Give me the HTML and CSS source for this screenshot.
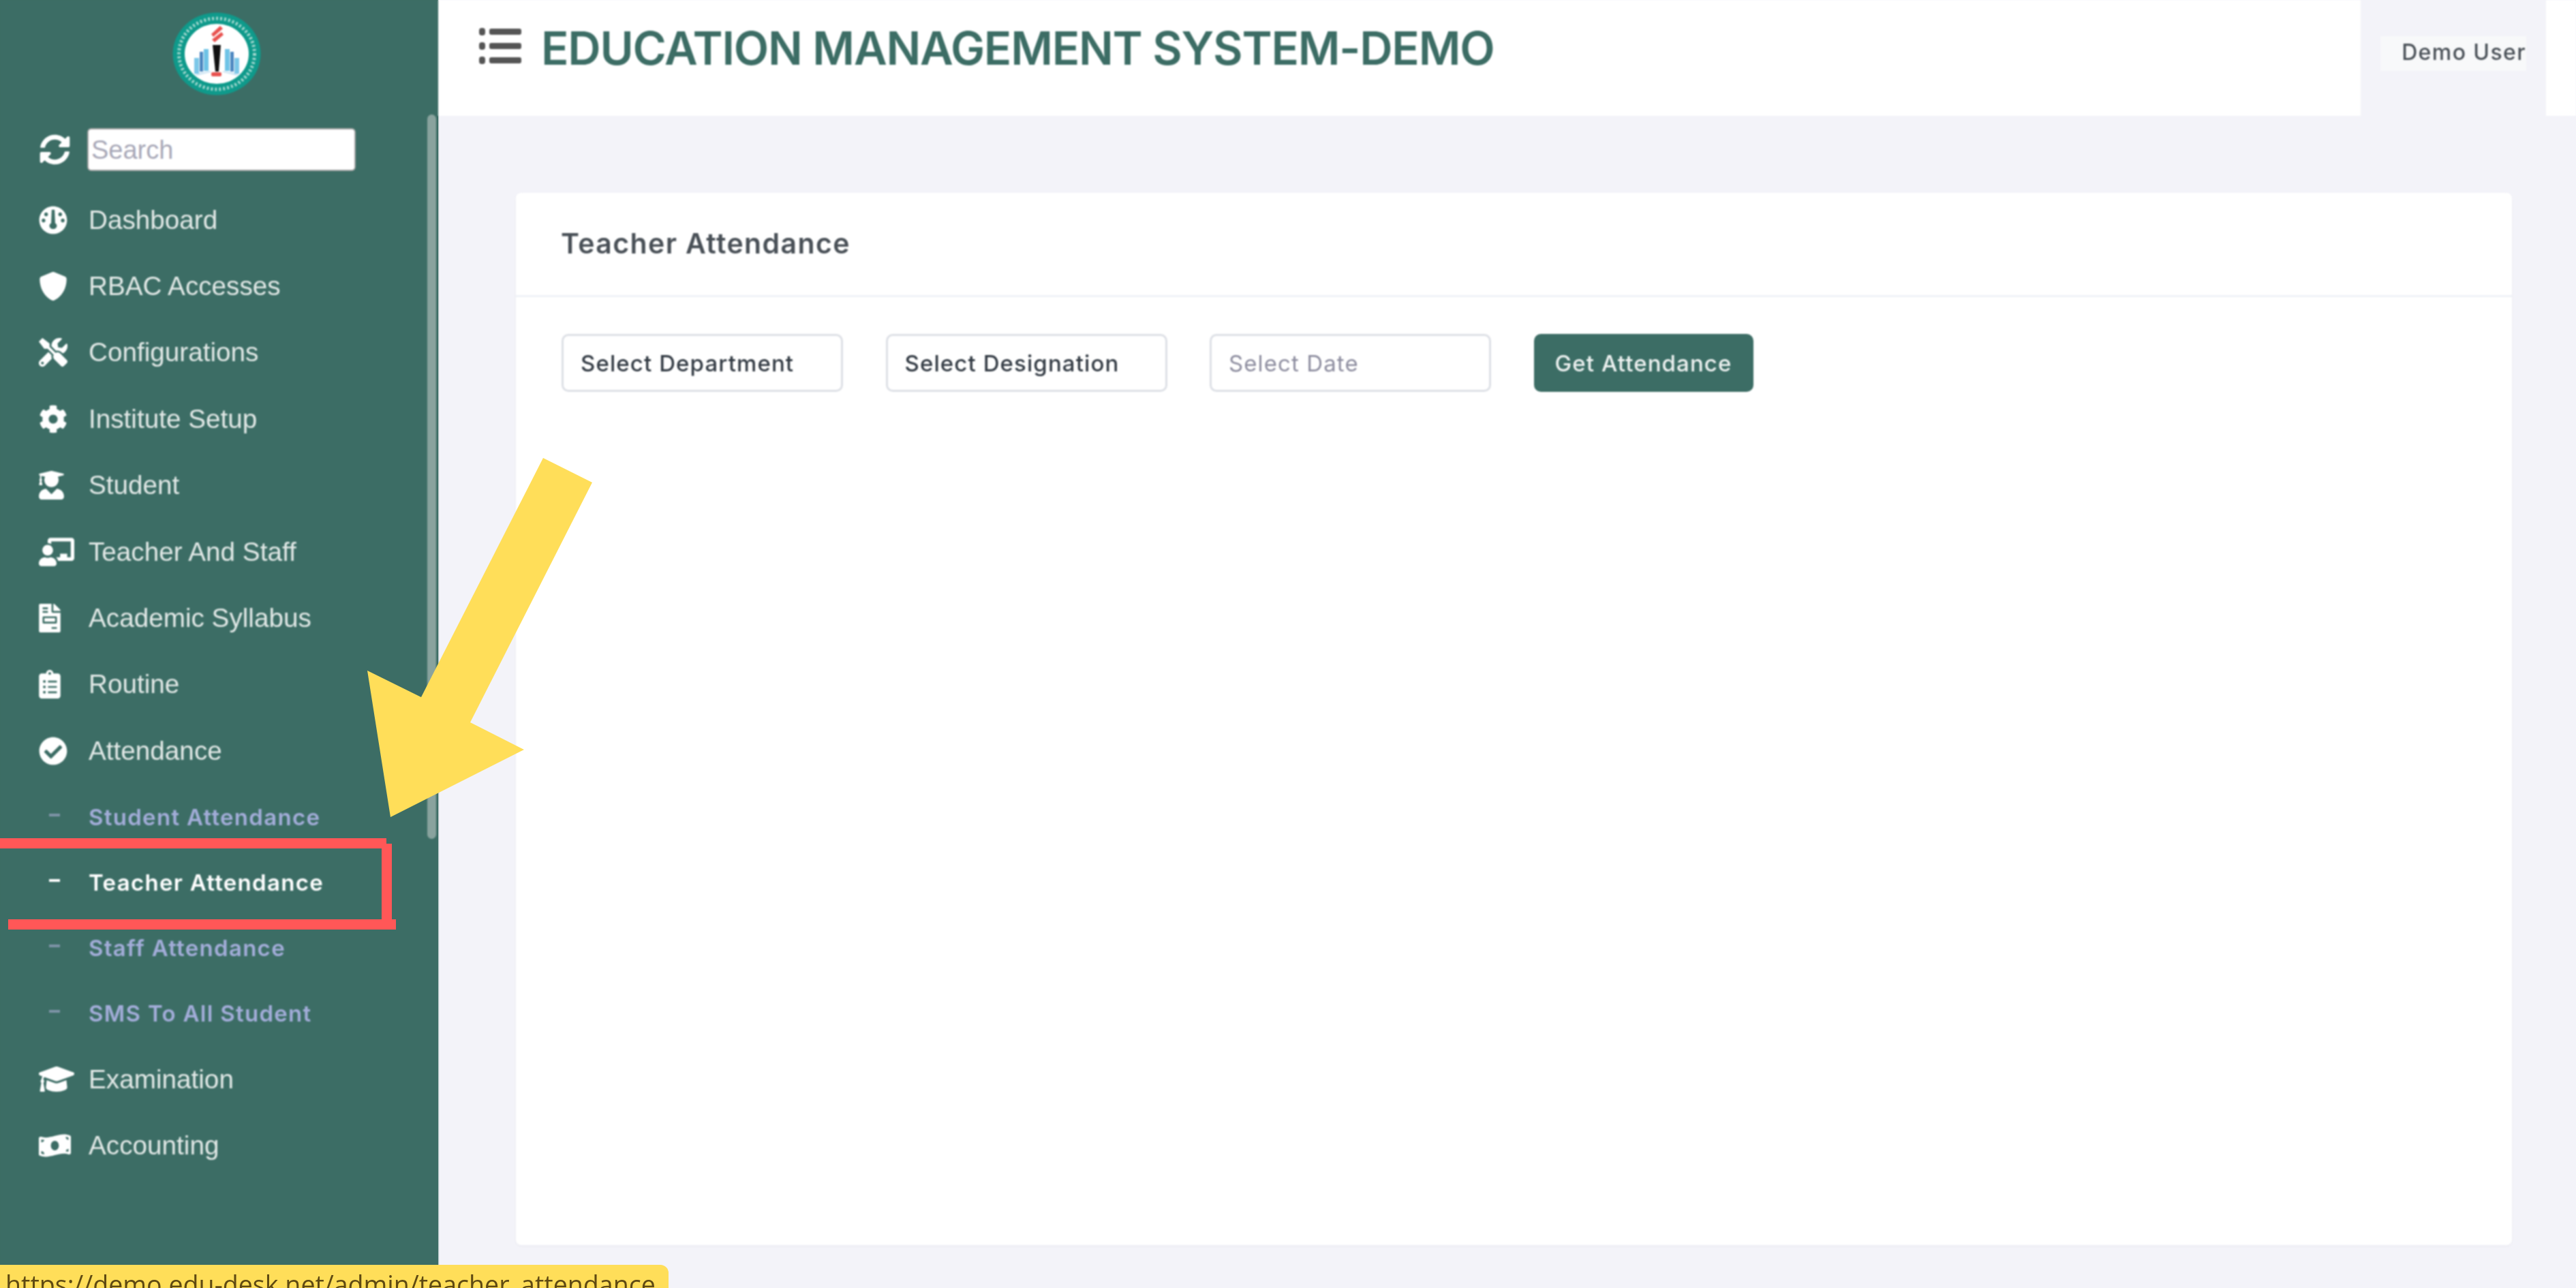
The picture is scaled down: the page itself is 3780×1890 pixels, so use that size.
FILE: index.html
```html
<!DOCTYPE html>
<html lang="en">
<head>
<meta charset="utf-8">
<title>Teacher Attendance</title>
<link rel="stylesheet" href="styles.css">
</head>
<body>
<div class="app">
  <aside class="sidebar">
    <div class="logo">
      <svg class="logo-svg" viewBox="0 0 130 122">
        <ellipse cx="65" cy="61" rx="64.5" ry="60.5" fill="#0f9a8b"/>
        <ellipse cx="65" cy="61" rx="55.5" ry="52" fill="none" stroke="#9fd6cd" stroke-width="5" stroke-dasharray="3 3"/>
        <ellipse cx="65" cy="61" rx="47" ry="44" fill="#fff"/>
        <path d="M70 20l4 4-14 12-3-4zM72 29l3 4-13 11-4-4z" fill="#e8524f"/>
        <path d="M59 48h12l-3 39h-5z" fill="#111"/>
        <rect x="57" y="88" width="15" height="6" rx="2" fill="#e8524f"/>
        <path d="M32 90l24-4v2l-20 5z" fill="#cfe6f4"/>
        <path d="M98 90l-24-4v2l20 5z" fill="#cfe6f4"/>
        <rect x="32" y="67" width="7" height="23" fill="#7cc7e8"/>
        <rect x="40" y="58" width="5" height="29" fill="#4a86c0"/>
        <rect x="46" y="54" width="7" height="32" fill="#6ec3e6"/>
        <rect x="77" y="54" width="7" height="32" fill="#6ec3e6"/>
        <rect x="85" y="58" width="5" height="29" fill="#4a86c0"/>
        <rect x="91" y="67" width="7" height="23" fill="#7cc7e8"/>
      </svg>
    </div>
    <div class="thumb"></div>
    <div class="search-row">
      <svg class="icon sync" viewBox="0 0 512 512"><path d="M370.72 133.28C339.458 104.008 298.888 87.962 255.848 88c-77.458.068-144.328 53.178-162.791 126.85-1.344 5.363-6.122 9.15-11.651 9.15H24.103c-7.498 0-13.194-6.807-11.807-14.176C33.933 94.924 134.813 8 256 8c66.448 0 126.791 26.136 171.315 68.685L463.03 40.97C478.149 25.851 504 36.559 504 57.941V192c0 13.255-10.745 24-24 24H345.941c-21.382 0-32.09-25.851-16.971-40.971l41.75-41.749zM32 296h134.059c21.382 0 32.09 25.851 16.971 40.971l-41.75 41.75c31.262 29.273 71.835 45.319 114.876 45.28 77.418-.07 144.315-53.144 162.787-126.849 1.344-5.363 6.122-9.15 11.651-9.15h57.304c7.498 0 13.194 6.807 11.807 14.176C478.067 417.076 377.187 504 256 504c-66.448 0-126.791-26.136-171.315-68.685L48.97 471.03C33.851 486.149 8 475.441 8 454.059V320c0-13.255 10.745-24 24-24z"/></svg>
      <div class="search-box">Search</div>
    </div>
    <nav class="menu">
      <a class="item"><span class="ico"><svg class="icon" viewBox="0 0 512 512"><path fill-rule="evenodd" d="M256 8C119 8 8 119 8 256s111 248 248 248 248-111 248-248S393 8 256 8zM230 70h52l10 240c32 16 36 50 22 76-14 20-34 28-58 28s-44-8-58-28c-14-26-10-60 22-76zM130 120a34 34 0 1 1-.1 0zM382 120a34 34 0 1 1-.1 0zM84 230a34 34 0 1 1-.1 0zM428 230a34 34 0 1 1-.1 0z"/></svg></span>Dashboard</a>
      <a class="item"><span class="ico"><svg class="icon" viewBox="0 0 512 512"><path d="M466.5 83.7l-192-80a48.15 48.15 0 0 0-36.9 0l-192 80C27.7 91.1 16 108.6 16 128c0 198.5 114.5 335.7 221.5 380.3 11.8 4.9 25.1 4.9 36.9 0C360.1 472.6 496 349.3 496 128c0-19.4-11.7-36.9-29.5-44.3z"/></svg></span>RBAC Accesses</a>
      <a class="item"><span class="ico"><svg class="icon" viewBox="0 0 512 512"><path d="M501.1 395.7L384 278.6c-23.1-23.1-57.6-27.6-85.4-13.9L192 158.1V96L64 0 0 64l96 128h62.1l106.6 106.6c-13.6 27.8-9.2 62.3 13.9 85.4l117.1 117.1c14.6 14.6 38.2 14.6 52.7 0l52.7-52.7c14.5-14.6 14.5-38.2 0-52.7zM331.7 225c28.3 0 54.9 11 74.9 31l19.4 19.4c15.8-6.9 30.8-16.5 43.8-29.5 37.1-37.1 49.7-89.3 37.9-136.7-2.2-9-13.5-12.1-20.1-5.5l-74.4 74.4-67.9-11.3L334 98.9l74.4-74.4c6.6-6.6 3.4-17.9-5.7-20.2-47.4-11.7-99.6.9-136.6 37.9-28.5 28.5-41.9 66.1-41.2 103.6l82.1 82.1c8.1-1.9 16.5-2.9 24.7-2.9zm-103.9 82l-56.7-56.7L18.7 402.8c-25 25-25 65.5 0 90.5s65.5 25 90.5 0l123.6-123.6c-7.6-19.9-9.9-41.6-5-62.7zM64 472c-13.2 0-24-10.8-24-24 0-13.3 10.7-24 24-24s24 10.7 24 24c0 13.2-10.7 24-24 24z"/></svg></span>Configurations</a>
      <a class="item"><span class="ico"><svg class="icon" viewBox="0 0 512 512"><path d="M487.4 315.7l-42.6-24.6c4.3-23.2 4.3-47 0-70.2l42.6-24.6c4.9-2.8 7.1-8.6 5.5-14-11.1-35.6-30-67.8-54.7-94.6-3.8-4.1-10-5.1-14.8-2.3L380.8 110c-17.9-15.4-38.5-27.3-60.8-35.1V25.8c0-5.6-3.9-10.5-9.4-11.7-36.7-8.2-74.3-7.8-109.2 0-5.5 1.2-9.4 6.1-9.4 11.7V75c-22.2 7.9-42.8 19.8-60.8 35.1L88.7 85.5c-4.9-2.8-11-1.9-14.8 2.3-24.7 26.7-43.6 58.9-54.7 94.6-1.7 5.4.6 11.2 5.5 14L67.3 221c-4.3 23.2-4.3 47 0 70.2l-42.6 24.6c-4.9 2.8-7.1 8.6-5.5 14 11.1 35.6 30 67.8 54.7 94.6 3.8 4.1 10 5.1 14.8 2.3l42.6-24.6c17.9 15.4 38.5 27.3 60.8 35.1v49.2c0 5.6 3.9 10.5 9.4 11.7 36.7 8.2 74.3 7.8 109.2 0 5.5-1.2 9.4-6.1 9.4-11.7v-49.2c22.2-7.9 42.8-19.8 60.8-35.1l42.6 24.6c4.9 2.8 11 1.9 14.8-2.3 24.7-26.7 43.6-58.9 54.7-94.6 1.5-5.5-.7-11.3-5.6-14.1zM256 336c-44.1 0-80-35.9-80-80s35.9-80 80-80 80 35.9 80 80-35.9 80-80 80z"/></svg></span>Institute Setup</a>
      <a class="item"><span class="ico"><svg class="icon narrow" viewBox="0 0 448 512"><path d="M319.4 320.6L224 416l-95.4-95.4C57.1 323.7 0 382.2 0 454.4v9.6c0 26.5 21.5 48 48 48h352c26.5 0 48-21.5 48-48v-9.6c0-72.2-57.1-130.7-128.6-133.8zM13.6 79.8l6.4 1.5v58.4c-7 4.2-12 11.5-12 20.3 0 8.4 4.6 15.4 11.1 19.7L3.5 242c-1.7 6.9 2.1 14 7.6 14h41.8c5.5 0 9.3-7.1 7.6-14l-15.6-62.3C51.4 175.4 56 168.4 56 160c0-8.8-5-16.1-12-20.3V87.1l66 15.9c-8.6 17.2-14 36.4-14 57 0 70.7 57.3 128 128 128s128-57.3 128-128c0-20.6-5.3-39.8-14-57l96.3-23.2c18.2-4.4 18.2-27.1 0-31.5l-190.4-46c-13-3.1-26.7-3.1-39.7 0L13.6 48.2c-18.1 4.4-18.1 27.2 0 31.6z"/></svg></span>Student</a>
      <a class="item"><span class="ico"><svg class="icon wide" viewBox="0 0 640 512"><path d="M208 352c-2.39 0-4.78.35-7.06 1.09C187.98 357.3 174.35 360 160 360c-14.35 0-27.98-2.7-40.95-6.91-2.28-.74-4.66-1.09-7.05-1.09C49.94 352-.33 402.48 0 464.62.14 490.88 21.73 512 48 512h224c26.27 0 47.86-21.12 48-47.38.33-62.14-49.94-112.62-112-112.62zm-48-32c53.02 0 96-42.98 96-96s-42.98-96-96-96-96 42.98-96 96 42.98 96 96 96zM592 0H208c-26.47 0-48 22.25-48 49.59V96c23.42 0 45.1 6.78 64 17.8V64h352v288h-64v-64H384v64h-76.24c19.1 16.69 33.12 38.73 39.69 64H592c26.47 0 48-22.25 48-49.59V49.59C640 22.25 618.47 0 592 0z"/></svg></span>Teacher And Staff</a>
      <a class="item"><span class="ico"><svg class="icon slim" viewBox="0 0 384 512"><path d="M288 256H96v64h192v-64zm89-151L279.1 7c-4.5-4.5-10.6-7-17-7H256v128h128v-6.1c0-6.3-2.5-12.4-7-16.9zm-153 31V0H24C10.7 0 0 10.7 0 24v464c0 13.3 10.7 24 24 24h336c13.3 0 24-10.7 24-24V160H248c-13.2 0-24-10.8-24-24zM64 72c0-4.42 3.58-8 8-8h80c4.42 0 8 3.58 8 8v16c0 4.42-3.58 8-8 8H72c-4.42 0-8-3.58-8-8V72zm0 64c0-4.42 3.58-8 8-8h80c4.42 0 8 3.58 8 8v16c0 4.42-3.58 8-8 8H72c-4.42 0-8-3.58-8-8v-16zm256 304c0 4.42-3.58 8-8 8h-80c-4.42 0-8-3.58-8-8v-16c0-4.42 3.58-8 8-8h80c4.42 0 8 3.58 8 8v16zm0-200v96c0 8.84-7.16 16-16 16H80c-8.84 0-16-7.16-16-16v-96c0-8.84 7.16-16 16-16h224c8.84 0 16 7.16 16 16z"/></svg></span>Academic Syllabus</a>
      <a class="item"><span class="ico"><svg class="icon slim" viewBox="0 0 384 512"><path d="M336 64h-80c0-35.3-28.7-64-64-64s-64 28.7-64 64H48C21.5 64 0 85.5 0 112v352c0 26.5 21.5 48 48 48h288c26.5 0 48-21.5 48-48V112c0-26.5-21.5-48-48-48zM96 424c-13.3 0-24-10.7-24-24s10.7-24 24-24 24 10.7 24 24-10.7 24-24 24zm0-96c-13.3 0-24-10.7-24-24s10.7-24 24-24 24 10.7 24 24-10.7 24-24 24zm0-96c-13.3 0-24-10.7-24-24s10.7-24 24-24 24 10.7 24 24-10.7 24-24 24zm96-192c13.3 0 24 10.7 24 24s-10.7 24-24 24-24-10.7-24-24 10.7-24 24-24zm128 368c0 4.4-3.6 8-8 8H168c-4.4 0-8-3.6-8-8v-16c0-4.4 3.6-8 8-8h144c4.4 0 8 3.6 8 8v16zm0-96c0 4.4-3.6 8-8 8H168c-4.4 0-8-3.6-8-8v-16c0-4.4 3.6-8 8-8h144c4.4 0 8 3.6 8 8v16zm0-96c0 4.4-3.6 8-8 8H168c-4.4 0-8-3.6-8-8v-16c0-4.4 3.6-8 8-8h144c4.4 0 8 3.6 8 8v16z"/></svg></span>Routine</a>
      <a class="item"><span class="ico"><svg class="icon" viewBox="0 0 512 512"><path d="M504 256c0 136.967-111.033 248-248 248S8 392.967 8 256 119.033 8 256 8s248 111.033 248 248zM227.314 387.314l184-184c6.248-6.248 6.248-16.379 0-22.627l-22.627-22.627c-6.248-6.249-16.379-6.249-22.628 0L216 308.118l-70.059-70.059c-6.248-6.248-16.379-6.248-22.628 0l-22.627 22.627c-6.248 6.248-6.248 16.379 0 22.627l104 104c6.249 6.249 16.379 6.249 22.628.001z"/></svg></span>Attendance</a>
      <a class="sub"><span class="dash"></span>Student Attendance</a>
      <a class="sub active"><span class="dash"></span>Teacher Attendance</a>
      <a class="sub"><span class="dash"></span>Staff Attendance</a>
      <a class="sub"><span class="dash"></span>SMS To All Student</a>
      <a class="item"><span class="ico"><svg class="icon cap" viewBox="0 64 640 384" preserveAspectRatio="none"><path d="M622.34 153.2L343.4 67.5c-15.2-4.67-31.6-4.67-46.79 0L17.66 153.2c-23.54 7.23-23.54 38.36 0 45.59l48.63 14.94c-10.67 13.19-17.23 29.28-17.88 46.9C38.78 266.15 32 276.11 32 288c0 10.78 5.68 19.85 13.86 25.65L20.33 428.53C18.11 438.52 25.71 448 35.94 448h56.11c10.24 0 17.84-9.48 15.62-19.47L82.14 313.65C90.32 307.85 96 298.78 96 288c0-11.57-6.47-21.25-15.66-26.87.76-15.02 8.44-28.3 20.69-36.72L296.6 284.5c9.06 2.78 26.44 6.25 46.79 0l278.95-85.7c23.55-7.24 23.55-38.36 0-45.6zM352.79 315.09c-28.53 8.76-52.84 3.92-65.59 0l-145.02-44.55L128 384c0 35.35 85.96 64 192 64s192-28.65 192-64l-14.18-113.47-145.03 44.56z"/></svg></span>Examination</a>
      <a class="item"><span class="ico"><svg class="icon bill" viewBox="0 0 640 512"><path d="M621.16 54.46C582.37 38.19 543.55 32 504.75 32c-123.17-.01-246.33 62.34-369.5 62.35-30.89 0-61.76-3.92-92.65-13.72-3.47-1.1-6.95-1.62-10.35-1.62C15.04 79 0 92.32 0 110.81v317.26c0 12.63 7.23 24.6 18.84 29.46C57.63 473.81 96.45 480 135.25 480c123.17 0 246.34-62.35 369.51-62.35 30.89 0 61.76 3.92 92.65 13.72 3.47 1.1 6.95 1.62 10.35 1.62 17.21 0 32.25-13.32 32.25-31.81V83.93c-.01-12.64-7.24-24.6-18.85-29.47zM48 132.22c20.12 5.04 41.12 7.57 62.72 8.93C104.84 170.54 79 192.69 48 192.69v-60.47zm0 285v-47.78c34.37 0 62.18 27.27 63.71 61.4-22.53-1.81-43.59-6.31-63.71-13.62zM320 352c-44.19 0-80-42.99-80-96 0-53.02 35.82-96 80-96s80 42.98 80 96c0 53.03-35.83 96-80 96zm272 27.78c-17.52-4.39-35.71-6.85-54.32-8.44 5.87-26.08 27.5-45.88 54.32-49.28v57.72zm0-236.11c-30.89-3.91-54.86-29.7-55.81-61.55 19.54 2.17 38.09 6.23 55.81 12.66v48.89z"/></svg></span>Accounting</a>
    </nav>
  </aside>
  <div class="main">
    <header class="topbar">
      <div class="brand">
        <svg class="burger" viewBox="0 0 62 54"><g fill="#555"><rect x="0" y="1" width="9" height="11" rx="4"/><rect x="0" y="22" width="9" height="11" rx="4"/><rect x="0" y="43" width="9" height="11" rx="4"/><rect x="15" y="2" width="47" height="9" rx="3"/><rect x="15" y="23" width="47" height="9" rx="3"/><rect x="15" y="44" width="47" height="9" rx="3"/></g></svg>
        <h1 class="title">EDUCATION MANAGEMENT SYSTEM-DEMO</h1>
      </div>
      <div class="user"><span class="user-name">Demo User</span></div>
    </header>
    <section class="content">
      <div class="card">
        <div class="card-head">Teacher Attendance</div>
        <div class="filters">
          <div class="field">Select Department</div>
          <div class="field">Select Designation</div>
          <div class="field placeholder">Select Date</div>
          <div class="btn">Get Attendance</div>
        </div>
      </div>
    </section>
  </div>
</div>
<svg class="annotation" viewBox="0 0 3780 1890">
  <polygon class="arrow" points="797,672 869,708 690,1060 769,1100 573,1199 539,984 618,1023"/>
  <g class="mark">
    <rect x="0" y="1230" width="567" height="15"/>
    <rect x="560" y="1238" width="15" height="112"/>
    <rect x="12" y="1349" width="569" height="15"/>
  </g>
</svg>
<div class="status">https://demo.edu-desk.net/admin/teacher_attendance</div>
</body>
</html>
```
FILE: styles.css
```css
* { box-sizing: border-box; }
html, body { margin: 0; height: 100%; overflow: hidden; }
body { background: linear-gradient(to right, #3c6d65 643px, #f3f3f9 643px); font-family: "Liberation Sans", Arial, sans-serif; }
.app { display: flex; height: 1890px; width: 3780px; filter: blur(0.9px); }

.sidebar { position: relative; width: 643px; flex: none; background: #3c6d65; color: #e9efee; padding-top: 18px; }
.logo { display: flex; justify-content: center; height: 170px; }
.logo-svg { width: 130px; height: 122px; margin-right: 7px; }
.thumb { position: absolute; left: 627px; top: 168px; width: 13px; height: 1063px; border-radius: 7px; background: #89a39e; }

.search-row { display: flex; align-items: center; height: 63px; padding-left: 58px; }
.search-box { width: 394px; height: 63px; background: #fff; border: 2px solid #a5a5a5; border-radius: 6px; color: #a9a9b8; font-size: 38px; line-height: 61px; padding-left: 4px; }

.icon { display: block; width: 42px; height: 42px; fill: #fff; }
.icon.sync { width: 45px; height: 45px; margin-right: 25px; }
.icon.wide { width: 52px; }
.icon.narrow { width: 37px; }
.icon.slim { width: 32px; }
.icon.cap { width: 52px; height: 37px; }
.icon.bill { width: 47px; height: 38px; }

.menu { display: flex; flex-direction: column; margin-top: 23px; }
.item { display: flex; align-items: center; height: 97.4px; font-size: 38.7px; padding-left: 57px; color: #e2e9e7; }
.ico { width: 73px; flex: none; display: flex; align-items: center; }
.sub { display: flex; align-items: center; height: 96.2px; padding-left: 72px; font-family: Inter, "Liberation Sans", sans-serif; font-weight: 600; font-size: 33px; letter-spacing: 1.3px; color: #a3add9; }
.sub.active { color: #fff; }
.dash { width: 16px; height: 4px; margin-right: 42px; background: #7f94a8; position: relative; top: -3px; }
.sub.active .dash { background: #fff; }

.main { flex: 1; display: flex; flex-direction: column; min-width: 0; }
.topbar { height: 170px; background: #fff; display: flex; justify-content: space-between; flex: none; padding-right: 44px; }
.brand { display: flex; align-items: flex-start; padding: 40px 0 0 60px; }
.burger { width: 62px; height: 54px; margin-right: 29px; flex: none; }
.title { margin: -14px 0 0; font-family: Inter, "Liberation Sans", sans-serif; font-size: 67px; letter-spacing: -1.25px; line-height: 90px; font-weight: 600; color: #3c6d65; white-space: nowrap; }
.user { width: 272px; background: #f3f3f9; padding: 53px 29px 0 29px; }
.user-name { display: block; height: 51px; background: #f8f9fa; color: #495057; font-family: Inter, "Liberation Sans", sans-serif; font-weight: 500; font-size: 32px; letter-spacing: 1.4px; line-height: 48px; text-align: right; white-space: nowrap; }

.content { flex: 1; padding: 113px 94px 63px 114px; }
.card { height: 100%; background: #fff; border-radius: 8px; box-shadow: 0 2px 4px rgba(18,38,63,.03); }
.card-head { height: 153px; padding-left: 66px; display: flex; align-items: center; border-bottom: 3px solid #eff2f7; font-family: Inter, "Liberation Sans", sans-serif; font-weight: 600; font-size: 41px; letter-spacing: 1.4px; color: #495057; padding-bottom: 3px; }
.filters { display: flex; gap: 62.5px; padding: 54px 67px 0; }
.field, .btn { height: 85px; display: flex; align-items: center; font-family: Inter, "Liberation Sans", sans-serif; font-size: 33px; letter-spacing: 1.1px; font-weight: 500; border-radius: 10px; white-space: nowrap; }
.field { width: 413px; padding-left: 25px; background: #fff; border: 3px solid #dde0e6; color: #333b44; }
.field.placeholder { color: #8d8d9f; font-weight: 400; }
.btn { width: 322px; justify-content: center; background: #3c6d65; color: #eef2f1; }

.annotation { position: absolute; left: 0; top: 0; width: 3780px; height: 1890px; pointer-events: none; }
.arrow { fill: #ffde59; }
.mark rect { fill: #ff5757; }

.status { position: absolute; left: 0; top: 1856px; width: 981px; height: 34px; overflow: hidden; background: #ffde59; border-top-right-radius: 12px; padding-left: 8px; font-family: "Open Sans", sans-serif; font-size: 37.6px; line-height: 58px; color: #5f4a12; white-space: nowrap; }
```
